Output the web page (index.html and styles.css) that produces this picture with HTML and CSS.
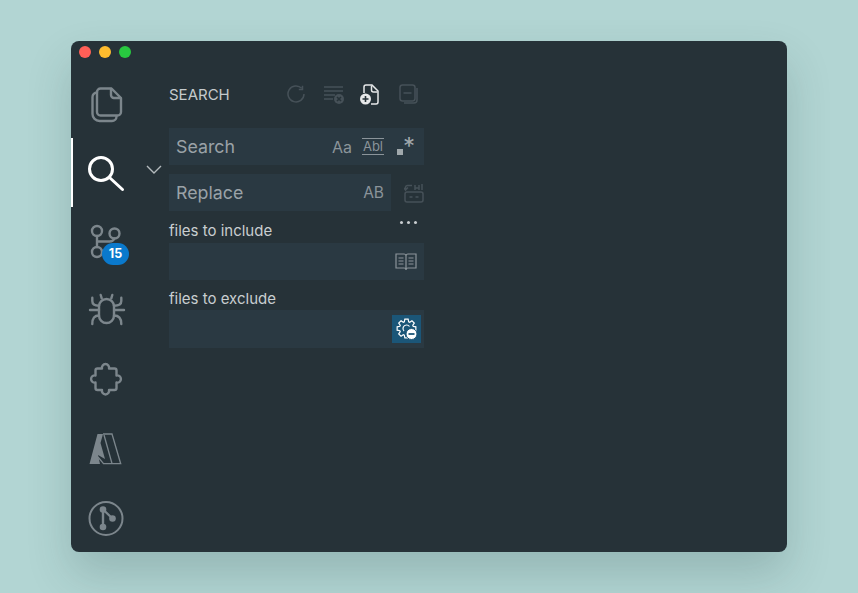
FILE: index.html
```html
<!DOCTYPE html>
<html lang="en">
<head>
<meta charset="utf-8">
<title>Search</title>
<link rel="stylesheet" href="styles.css">
</head>
<body>
<div class="window">
  <div class="titlebar">
    <span class="light red"></span><span class="light yellow"></span><span class="light green"></span>
  </div>
  <div class="main">
    <nav class="activity">
      <div class="act">
        <svg width="32" height="36" viewBox="-1 -1 32 36" class="ico"><path d="M9.500 1.500H20.500L30 11V25a3.500 3.500 0 0 1-3.500 3.500H9.500A3.500 3.500 0 0 1 6 25V5a3.500 3.500 0 0 1 3.500-3.500z"/><path d="M20 2v6a3 3 0 0 0 3 3h6.500"/><path d="M6 5.500a4.500 4.500 0 0 0-4.500 4.500V27a7 7 0 0 0 7 7H21a4.500 4.500 0 0 0 4.500-4.500"/></svg>
      </div>
      <div class="act active">
        <svg width="36" height="36" viewBox="0 0 36 36" class="ico white"><circle cx="13" cy="14" r="11.500"/><path d="M21.500 22.500L34.500 34.500"/></svg>
      </div>
      <div class="act">
        <svg width="32" height="34" viewBox="0 0 32 34" class="ico"><circle cx="7" cy="6" r="5"/><circle cx="24.500" cy="8.500" r="5"/><circle cx="7" cy="27" r="5"/><path d="M7 11V22M7 16.500H19a5.500 5.500 0 0 0 5.500-3"/></svg>
        <span class="badge">15</span>
      </div>
      <div class="act">
        <svg width="36" height="36" viewBox="-1 0 36 36" class="ico"><path d="M10 13.500a7.500 7.500 0 0 1 15 0V22.500a7.500 7.500 0 0 1-15 0z"/><path d="M11.700 2l1 3.300M23.300 2l-1 3.300M3.300 4.700V8c0 3 2.500 4.700 6.700 4.700M32.300 4.700V8c0 3-2.500 4.700-7.300 4.700M1 17H10M26 17H35M10 22.500c-4.500 0-6.700 2.500-6.700 8.500M25 22.500c4.800 0 7.300 2.500 7.300 8.500"/></svg>
      </div>
      <div class="act">
        <svg width="32" height="33" viewBox="0 0 32 33" class="ico"><path d="M7.500 5.500H12A3.600 3.600 0 1 1 19 5.500H24.500a2 2 0 0 1 2 2V12.500A3.600 3.600 0 1 1 26.500 19.500V25a2 2 0 0 1-2 2H19A3.600 3.600 0 1 1 12 27H7.500a2 2 0 0 1-2-2V19.500A3.600 3.600 0 1 1 5.500 12.500V7.500a2 2 0 0 1 2-2z"/></svg>
      </div>
      <div class="act">
        <svg width="33" height="32" viewBox="0 0 33 32"><path class="fill" d="M8.500 1H14L11.500 10 16 26 9 22 11 31H.5z"/><path class="thin" d="M14 1H23L31.700 30.700H14.500L9 24"/><path class="thin" d="M15 2L23 30.500"/></svg>
      </div>
      <div class="act">
        <svg width="36" height="36" viewBox="0 0 36 36"><circle class="ico thin2" cx="18" cy="18.500" r="16.500"/><path class="ico" d="M15 9.500V27M15 9.500L24.500 18.500"/><circle class="dot" cx="15" cy="9.500" r="3.300"/><circle class="dot" cx="15" cy="27" r="3.300"/><circle class="dot" cx="24.500" cy="18.500" r="3.300"/></svg>
      </div>
    </nav>
    <div class="chev">
      <svg width="16" height="9" viewBox="0 0 16 9" class="chev-ico"><path d="M1 1l7 7 7-7"/></svg>
    </div>
    <section class="panel">
      <header class="head">
        <h1 class="title">SEARCH</h1>
        <svg width="18" height="18" viewBox="0 0 18 18" class="tool dim"><path d="M15.500 .8V4.500H11.800"/><path d="M14.700 3.300A8 8 0 1 0 17 9"/></svg>
        <svg width="22" height="20" viewBox="0 0 22 20" class="tool dim t-list"><path d="M1 3H20M1 7H20M1 11H12M1 15H10"/><circle class="dim-fill" cx="16" cy="15" r="5"/><path class="bg-line" d="M14 13l4 4m0-4l-4 4"/></svg>
        <svg width="20" height="21" viewBox="0 0 20 21" class="tool bright t-new"><path d="M4 9V3a2 2 0 0 1 2-2h6l6 6v11a2 2 0 0 1-2 2h-5"/><path d="M11.500 1.500V6a2 2 0 0 0 2 2h4"/><circle class="bright-fill" cx="5.500" cy="15" r="5.500"/><path class="bg-line" d="M2.500 15h6m-3-3v6"/></svg>
        <svg width="19" height="20" viewBox="0 0 19 20" class="tool dim t-col"><rect x="1" y="1" width="15" height="16" rx="2.500"/><path d="M4.500 9h8M18 4v12a3 3 0 0 1-3 3H5"/></svg>
      </header>
      <div class="input search">
        <span class="ph">Search</span>
        <span class="opt aa">Aa</span>
        <span class="opt word">Abl</span>
        <span class="regex"><i class="sq"></i><span class="star">*</span></span>
      </div>
      <div class="replace-row">
        <div class="input replace">
          <span class="ph">Replace</span>
          <span class="opt ab">AB</span>
        </div>
        <svg width="20" height="20" viewBox="0 0 20 20" class="tool dim rep-all"><rect x="1" y="9" width="18" height="10" rx="2"/><path d="M8 2.500H3.500a2 2 0 0 0-2 2V7M4 4.500L1.500 7 0 5M11 7V2M15 7V2M11 5h4M18 7V1M5.500 14h3M11.500 14h3"/></svg>
      </div>
      <div class="label-row">
        <span class="label">files to include</span>
        <span class="dots"><i></i><i></i><i></i></span>
      </div>
      <div class="input small">
        <svg width="22" height="18" viewBox="0 0 22 18" class="tool book"><path d="M11 3a2 2 0 0 0-2-2H1v14h8a2 2 0 0 1 2 2 2 2 0 0 1 2-2h8V1h-8a2 2 0 0 0-2 2zM11 3v14M3.500 5h5M3.500 8h5M3.500 11h5M13.500 5h5M13.500 8h5M13.500 11h5"/></svg>
      </div>
      <div class="label-row low">
        <span class="label">files to exclude</span>
      </div>
      <div class="input small ex">
        <span class="gear">
          <svg width="22" height="22" viewBox="0 0 22 22" class="gear-ico"><polygon transform="translate(10.500 10.500)" points="6.660,-2.160 9.360,-1.650 9.360,1.650 6.660,2.160 6.240,3.180 7.780,5.450 5.450,7.780 3.180,6.240 2.160,6.660 1.650,9.360 -1.650,9.360 -2.160,6.660 -3.180,6.240 -5.450,7.780 -7.780,5.450 -6.240,3.180 -6.660,2.160 -9.360,1.650 -9.360,-1.650 -6.660,-2.160 -6.240,-3.180 -7.780,-5.450 -5.450,-7.780 -3.180,-6.240 -2.160,-6.660 -1.650,-9.360 1.650,-9.360 2.160,-6.660 3.180,-6.240 5.450,-7.780 7.780,-5.450 6.240,-3.180"/><path d="M8 13a3.500 3.500 0 0 1 2.500-6 3.500 3.500 0 0 1 3 1.500"/><circle class="gear-dot" cx="15.500" cy="16" r="5.500"/><path class="gear-minus" d="M12.500 16h6"/></svg>
        </span>
      </div>
    </section>
  </div>
</div>
</body>
</html>
```

FILE: styles.css
```css
* { box-sizing: border-box; }
html, body { margin: 0; height: 100%; }
body {
  width: 858px;
  height: 593px;
  overflow: hidden;
  padding: 41px 71px;
  background: #b2d5d3;
  font-family: Inter, "Liberation Sans", Arial, sans-serif;
}
.window {
  width: 716px;
  height: 511px;
  background: #263238;
  border-radius: 8px;
  box-shadow: 0 22px 45px rgba(30, 60, 60, .2);
  overflow: hidden;
}
.titlebar {
  height: 28px;
  display: flex;
  gap: 8px;
  padding: 5px 0 0 8px;
  align-items: flex-start;
}
.light { width: 12px; height: 12px; border-radius: 50%; }
.red { background: #ff5f57; }
.yellow { background: #febc2e; }
.green { background: #28c840; }

.main { display: flex; }
.activity { width: 69px; display: flex; flex-direction: column; }
.act {
  position: relative;
  height: 69px;
  display: flex;
  align-items: center;
  justify-content: center;
}
.act svg { overflow: visible; }
.act.active { box-shadow: inset 2px 0 0 #fff; }
.ico, .ico path, .ico circle {
  fill: none;
  stroke: #7c868c;
  stroke-width: 2.400;
  stroke-linecap: round;
  stroke-linejoin: round;
}
.ico.white, .ico.white path, .ico.white circle { stroke: #fff; stroke-width: 3; }
.ico.thin2 { stroke-width: 2; }
.fill { fill: #7c868c; }
.thin { fill: none; stroke: #7c868c; stroke-width: 1.300; }
.dot { fill: #7c868c; }
.badge {
  position: absolute;
  left: 31px;
  top: 36px;
  width: 27px;
  height: 22px;
  border-radius: 11px;
  background: #0a79cc;
  color: #fff;
  font-size: 12.500px;
  font-weight: 700;
  line-height: 22px;
  text-align: center;
}
.chev { width: 29px; padding: 96px 0 0 6px; }
.chev-ico { display: block; fill: none; stroke: #b4babd; stroke-width: 1.400; }

.panel { width: 255px; padding-top: 11px; }
.head { height: 28px; display: flex; align-items: center; margin-bottom: 20px; }
.title {
  margin: 0 auto 0 0;
  font-size: 15px;
  font-weight: 400;
  color: #c5cacc;
}
.tool { fill: none; stroke-width: 1.500; flex: none; }
.dim { stroke: #465158; }
.bright { stroke: #e6e8e9; }
.dim-fill { fill: #465158; stroke: none; }
.bright-fill { fill: #e6e8e9; stroke: none; }
.bg-line { stroke: #263238; stroke-width: 1.600; }
.t-list { margin-left: 18px; }
.t-new { margin-left: 15px; }
.t-col { margin: 0 6px 0 19px; }

.input {
  height: 37px;
  background: #2a3942;
  display: flex;
  align-items: center;
  padding-left: 7px;
  color: #9aa2a7;
}
.ph { font-size: 17.800px; margin-right: auto; }
.opt { font-size: 16px; color: #8b949a; }
.word {
  font-size: 13px;
  margin-left: 10px;
  border-top: 1.500px solid #8b949a;
  border-bottom: 1.500px solid #8b949a;
  line-height: 15px;
  padding: 0 1px;
}
.regex { width: 19px; margin: 0 8px 0 13px; display: flex; position: relative; height: 20px; }
.sq { position: absolute; left: 0; top: 12px; width: 6px; height: 6px; background: #a0a8ac; }
.star { position: absolute; left: 6px; top: -2px; font-size: 24px; line-height: 24px; color: #a0a8ac; }
.replace-row { display: flex; align-items: center; margin-top: 9px; }
.replace { width: 223px; padding-right: 7px; }
.ab { font-size: 15.500px; }
.rep-all { margin-left: 13px; }
.label-row { height: 32px; display: flex; justify-content: space-between; align-items: flex-end; padding-bottom: 3px; }
.label-row.low { height: 30px; padding-bottom: 2px; }
.label { font-size: 15px; line-height: 18px; color: #c9ced0; }
.dots { display: flex; gap: 4px; align-self: flex-start; padding: 10px 7px 0 0; }
.dots i { width: 3px; height: 3px; border-radius: 50%; background: #c9ced0; }
.small { justify-content: flex-end; padding-right: 7px; }
.book { stroke: #8b949a; stroke-width: 1.200; }
.ex { height: 38px; padding-right: 3px; }
.gear { width: 29px; height: 28px; background: #1b5678; display: flex; align-items: center; justify-content: center; }
.gear-ico { fill: none; stroke: #fff; stroke-width: 1.200; }
.gear-dot { fill: #fff; stroke: #1b5678; stroke-width: 1; }
.gear-minus { stroke: #1b5678; stroke-width: 1.800; }
```
